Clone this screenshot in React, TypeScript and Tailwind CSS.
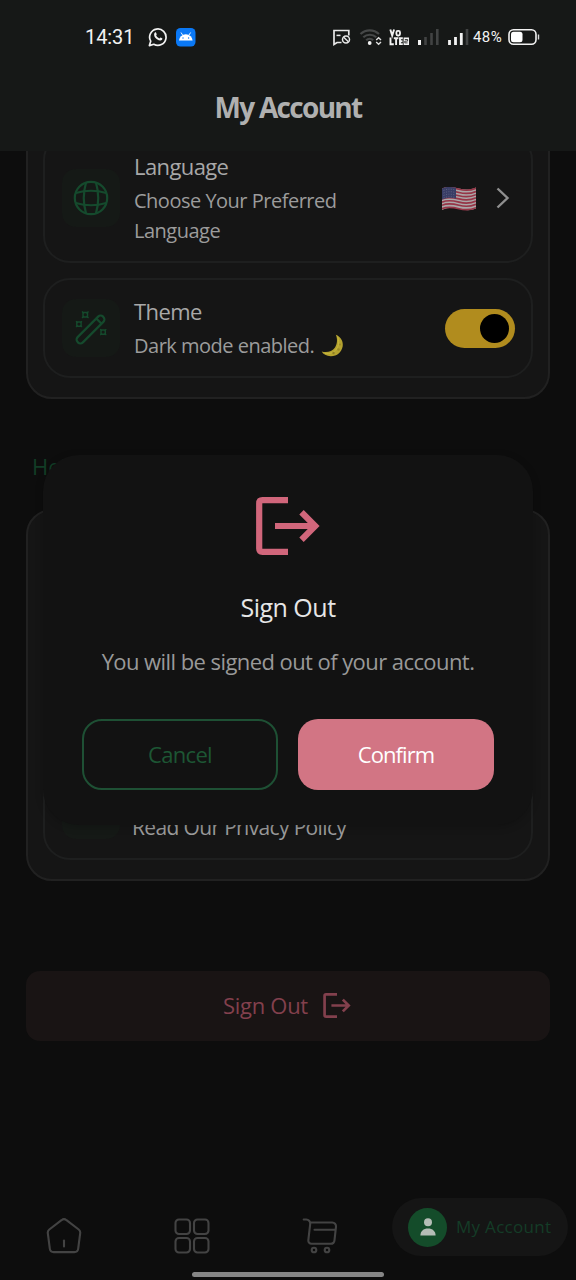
import React from "react";

function WhatsAppIcon() {
  return (
    <svg width="20" height="20" viewBox="0 0 20 20" fill="none" stroke="#f2f2f2" strokeWidth="1.7">
      <path d="M1.4 18.6l1.3-4.4a8.2 8.2 0 1 1 3.1 3.1z" strokeLinejoin="round" />
      <path
        d="M6.9 5.5c.5-.3 1-.2 1.2.3l.6 1.4c.1.4-.6 1-.5 1.3.7 1.3 1.7 2.3 3.1 2.9.4.1.9-.9 1.3-.8l1.5.7c.5.3.3 1-.1 1.5-1 1.2-2.8 1-5-.5C6.500 10.700 5.200 7.300 6.900 5.500z"
        fill="#f2f2f2"
        stroke="none"
      />
    </svg>
  );
}

function AndroidBadge() {
  return (
    <svg width="20" height="19" viewBox="0 0 20 19">
      <rect width="19.500" height="18.500" rx="4.500" fill="#0a78f5" />
      <path d="M3 12.600a6.800 6.300 0 0 1 13.600 0z" fill="#fff" />
      <path d="M5 4.500l1.900 3M14.600 4.500l-1.900 3" stroke="#fff" strokeWidth="0.900" />
      <circle cx="7" cy="10" r="0.700" fill="#0a78f5" />
      <circle cx="12.600" cy="10" r="0.700" fill="#0a78f5" />
    </svg>
  );
}

function StatusIcons() {
  return (
    <svg width="208" height="20" viewBox="332 27 208 20" fill="none">
      <path d="M341.500 42.500H337L334 44.500V30.500h14.800v5" stroke="#e8e8e8" strokeWidth="1.700" />
      <path d="M336.500 35.400h4" stroke="#e8e8e8" strokeWidth="1.500" />
      <circle cx="346" cy="39.500" r="3.500" stroke="#e8e8e8" strokeWidth="1.500" />
      <path d="M343.700 37.300l4.700 4.500" stroke="#e8e8e8" strokeWidth="1.400" />
      <path d="M360.500 34a13.500 13.500 0 0 1 18.500 0M363.300 37.300a9.500 9.500 0 0 1 13 0M366.200 40.300a5 5 0 0 1 7 0" stroke="#464848" strokeWidth="2.200" />
      <circle cx="369.700" cy="43" r="1.900" fill="#f2f2f2" />
      <path d="M376.200 40l2.400-2.200 2.400 2.200M376.200 42l2.400 2.200 2.400-2.200" stroke="#e0e0e0" strokeWidth="1.400" />
      <path d="M390.300 29.500l1.900 6 1.900-6M390.500 37.500v6.700h3.300M393.800 38.300h4.600M396.100 38.300v6.700M402.800 38.300h-2.800v5.800h2.800M400 41.200h2.500" stroke="#f2f2f2" strokeWidth="1.900" />
      <rect x="396.400" y="30.800" width="3.600" height="4.700" rx="1.500" stroke="#f2f2f2" strokeWidth="1.800" />
      <rect x="403.600" y="37.500" width="5.400" height="7.500" fill="#f2f2f2" />
      <path d="M404.800 39.500h2.800v1.600h-2.800v1.800h2.800" stroke="#161817" strokeWidth="0.800" />
      <path d="M419.500 40v5" stroke="#f2f2f2" strokeWidth="3" />
      <path d="M425.500 37v8M431.500 33v12M437.300 29v16" stroke="#414343" strokeWidth="2.600" />
      <path d="M449.500 40v5M455.500 37v8M461.300 33v12" stroke="#f2f2f2" strokeWidth="2.800" />
      <path d="M467 29v16" stroke="#414343" strokeWidth="2.600" />
      <rect x="509" y="29.800" width="27" height="14.400" rx="4.500" stroke="#f2f2f2" strokeWidth="1.600" />
      <rect x="511" y="31.700" width="11.500" height="10.600" rx="2.500" fill="#fff" />
      <path d="M538.500 34.500v5" stroke="#d8d8d8" strokeWidth="1.400" />
    </svg>
  );
}

function GlobeIcon() {
  return (
    <svg width="36" height="36" viewBox="0 0 36 36" fill="none" stroke="#154a2d" strokeWidth="2.200">
      <circle cx="18" cy="18" r="16.200" />
      <path d="M13 2.800C10.300 12 10.300 24 13 33.200M23 2.800C25.700 12 25.700 24 23 33.200M2.800 13C12 10.300 24 10.300 33.200 13M2.800 23C12 25.700 24 25.700 33.200 23" />
    </svg>
  );
}

function WandIcon() {
  return (
    <svg width="36" height="36" viewBox="0 0 36 36" fill="none" stroke="#154a2d" strokeWidth="2.200">
      <rect x="-3.700" y="-18" width="7.400" height="36" rx="3.500" transform="translate(17.500 19.500) rotate(45)" />
      <path d="M23.300 8.500l5.200 5.200" />
      <path d="M10 2.500h4.500v4.500H10zM3.800 12h4.300v4.300H3.800zM28 20h4.300v4.300H28z" strokeWidth="1.400" />
      <path d="M9 1.500l2 2M15.500 1.500l-2 2M9 8l2-2M15.500 8l-2-2M3 11.200l1.800 1.800M9 11.200l-1.800 1.800M3 17l1.800-1.800M9 17l-1.800-1.800M27.200 19.200l1.800 1.800M33.300 19.200l-1.800 1.800M27.200 25.200l1.800-1.800M33.300 25.200l-1.800-1.800" strokeWidth="1.200" />
    </svg>
  );
}

function FlagIcon() {
  const wave = (y: number) => `M0 ${y}C6 ${y - 2.5} 11 ${y - 1.5} 17 ${y}S28 ${y + 1.5} 34 ${y - 1}`;
  return (
    <svg width="34" height="25" viewBox="0 0 34 25" fill="none">
      <path d="M0 2.500C6 0 11 1 17 2.500S28 4 34 1.500V22.500C28 25 23 24.300 17 22.800S6 21.500 0 24z" fill="#aaa6a7" />
      {[3.3, 6.5, 9.7, 12.9, 16.1, 19.3, 22.7].map((y) => (
        <path key={y} d={wave(y)} stroke="#963547" strokeWidth="1.700" />
      ))}
      <path d="M0 2.500C5 .4 9 .8 14 1.800V12.500C9 11.500 5 11.500 0 13.500z" fill="#383d65" />
      <path d="M1.500 4.500C6 2.700 9 3 13 3.900M1.500 7C6 5.200 9 5.500 13 6.400M1.500 9.500C6 7.700 9 8 13 8.900M1.500 12C6 10.200 9 10.500 13 11.400" stroke="#666a88" strokeWidth="0.800" strokeDasharray="1 1.500" />
    </svg>
  );
}

function MoonIcon() {
  return (
    <svg width="24" height="24" viewBox="0 0 24 24">
      <path d="M14.800.800c5 2 7.700 6.500 6.900 11.500-1 6-6 10.200-12 10C5.500 22.100 2.200 20.300.700 17.500c5 1.500 10.500.2 13.300-4 2.300-3.600 2.700-8.500.8-12.700z" fill="#b4a22f" />
      <path d="M16.500 2.500c2 4 1.500 9-1 12.500-2.500 3.700-7 5.200-11.500 4.500" fill="none" stroke="#c6b73d" strokeWidth="1" />
      <circle cx="12.500" cy="19" r="1.200" fill="#8d7d23" />
      <circle cx="17.500" cy="15.500" r="1.300" fill="#9a8927" />
      <circle cx="19" cy="10.500" r=".9" fill="#9a8927" />
    </svg>
  );
}

function SignOutIcon({ className }: { className: string }) {
  return (
    <svg className={className} viewBox="0 0 64 58" fill="none" stroke="currentColor" strokeWidth="6.200">
      <path d="M32 3.200H6.500Q3.200 3.200 3.200 6.500v45Q3.200 54.800 6.500 54.800H32M19 29h40M45.500 15.300L59.200 29 45.500 42.700" />
    </svg>
  );
}

function HomeIcon() {
  return (
    <svg width="36" height="36" viewBox="0 0 36 36" fill="none" stroke="#434343" strokeWidth="2.100" strokeLinejoin="round" strokeLinecap="round">
      <path d="M15.500 2.200a4 4 0 0 1 5 0L32.700 11.500a4 4 0 0 1 1.500 3.700L32.200 30.500a4 4 0 0 1-4 3.600H7.800a4 4 0 0 1-4-3.600L1.800 15.200a4 4 0 0 1 1.500-3.700z" />
      <path d="M18 22.500v6" />
    </svg>
  );
}

function GridIcon() {
  return (
    <svg width="36" height="36" viewBox="0 0 36 36" fill="none" stroke="#434343" strokeWidth="2.100">
      <rect x="1.500" y="1.500" width="14.500" height="14.500" rx="3.500" />
      <rect x="20" y="1.500" width="14.500" height="14.500" rx="3.500" />
      <rect x="1.500" y="20" width="14.500" height="14.500" rx="3.500" />
      <rect x="20" y="20" width="14.500" height="14.500" rx="3.500" />
    </svg>
  );
}

function CartIcon() {
  return (
    <svg width="36" height="36" viewBox="0 0 36 36" fill="none" stroke="#434343" strokeWidth="2.100" strokeLinecap="round">
      <path d="M1.700 1.500h2.500a4 4 0 0 1 4 4.300L6.300 22.300a3.200 3.200 0 0 0 3.200 3.500H28.500a4 4 0 0 0 4-3.700L34 8.700a3.800 3.800 0 0 0-3.800-4.200H8M12.500 11.700h21" />
      <circle cx="12" cy="32" r="2.300" />
      <circle cx="25" cy="32" r="2.300" />
    </svg>
  );
}

function Row({ icon, children, trailing, className = "" }: { icon?: React.ReactNode; children?: React.ReactNode; trailing?: React.ReactNode; className?: string }) {
  return (
    <div className={`flex shrink-0 items-center rounded-[27px] border-2 border-[#1e1f1f] pr-4 pl-[17px] ${className}`}>
      <div className="flex size-[58px] shrink-0 items-center justify-center rounded-[14px] bg-[#151916]">{icon}</div>
      <div className="ml-[14px] flex-1">{children}</div>
      {trailing}
    </div>
  );
}

const card = "flex shrink-0 flex-col gap-[15px] rounded-[26px] border-2 border-[#212121] bg-[#151515] px-[15px] py-[19px]";

export default function App() {
  return (
    <div className="relative flex h-[1280px] w-[576px] flex-col overflow-hidden bg-[#0d0d0d] font-['Open_Sans',sans-serif] text-[#a8a8a8]">
      <header className="z-10 flex h-[151px] shrink-0 flex-col bg-[#161817]">
        <div className="flex h-[74px] items-center pr-9 pl-[85px] font-['Roboto',sans-serif] text-[#f2f2f2]">
          <span className="w-[63px] text-[20px] leading-none tracking-[-0.100px]">14:31</span>
          <WhatsAppIcon />
          <span className="ml-2">
            <AndroidBadge />
          </span>
          <div className="relative ml-auto">
            <StatusIcons />
            <span className="absolute top-[3px] left-[141px] text-[15px] leading-none tracking-[0.400px]">48%</span>
          </div>
        </div>
        <h1 className="mt-[13px] text-center text-[28px] leading-[40px] font-bold tracking-[-1.700px] text-[#b0b0b0]">My Account</h1>
      </header>

      <main className="flex min-h-0 flex-1 flex-col px-[26px]">
        <section className={`-mt-[39px] ${card}`}>
          <Row
            className="h-[130px]"
            icon={<GlobeIcon />}
            trailing={
              <div className="mr-[4px] flex items-center gap-[19px]">
                <FlagIcon />
                <svg width="16" height="22" viewBox="0 0 16 22" fill="none" stroke="#8f8f8f" strokeWidth="2.400">
                  <path d="M2.500 1.500l10 9.500-10 9.500" />
                </svg>
              </div>
            }
          >
            <p className="mb-1 text-[22px] leading-[30px] tracking-[-0.600px]">Language</p>
            <p className="w-[230px] pt-px text-[20px] leading-[30px] tracking-[-0.500px] text-[#9c9c9c]">Choose Your Preferred Language</p>
          </Row>
          <Row
            className="h-[100px]"
            icon={<WandIcon />}
            trailing={
              <div className="flex h-[39px] w-[70px] items-center justify-end rounded-full bg-[#b18c1e] pr-[6px]">
                <div className="size-[29px] rounded-full bg-black" />
              </div>
            }
          >
            <p className="mb-1 text-[22px] leading-[30px] tracking-[-0.600px]">Theme</p>
            <p className="flex items-center gap-[7px] pt-px text-[20px] leading-[30px] tracking-[-0.500px] text-[#9c9c9c]">
              <span>Dark mode enabled.</span>
              <MoonIcon />
            </p>
          </Row>
        </section>

        <h2 className="mt-[52px] shrink-0 pl-[6px] text-[22px] leading-[30px] text-[#123d26]">Help</h2>

        <section className={`mt-[28px] ${card}`}>
          <Row className="h-[100px]" />
          <Row className="h-[100px]" />
          <Row className="h-[100px]">
            <p className="-ml-[2px] pt-[34px] text-[21px] leading-[30px] tracking-[-0.650px] text-[#9c9c9c]">Read Our Privacy Policy</p>
          </Row>
        </section>

        <button className="mt-[90px] flex h-[70px] shrink-0 items-center justify-center gap-[15px] rounded-[14px] bg-[#191414] pr-[2px] pb-[2px] text-[22px] tracking-[-0.300px] text-[#83404d]">
          Sign Out
          <SignOutIcon className="h-[25px] w-[28px]" />
        </button>
      </main>

      <nav className="flex h-[95px] shrink-0 bg-[#0d0d0d]">
        <div className="flex w-32 justify-center pt-[33px]">
          <HomeIcon />
        </div>
        <div className="flex w-32 justify-center pt-[33px]">
          <GridIcon />
        </div>
        <div className="flex w-32 justify-center pt-[33px]">
          <CartIcon />
        </div>
        <div className="mt-[13px] ml-2 flex h-[58px] w-[176px] items-center rounded-full bg-[#151515] pl-4">
          <div className="flex size-[39px] items-center justify-center rounded-full bg-[#144c2a]">
            <svg width="16" height="18" viewBox="0 0 16 18" fill="#b5bdb6">
              <circle cx="8" cy="4.300" r="4" />
              <path d="M.4 17.500c0-4.300 3-7 7.600-7s7.600 2.700 7.600 7z" />
            </svg>
          </div>
          <span className="ml-[9px] text-[17px] tracking-[0.300px] whitespace-nowrap text-[#143c27]">My Account</span>
        </div>
      </nav>

      <div className="absolute bottom-[3px] left-[192px] h-[5px] w-[192px] rounded-full bg-[#868686]" />

      <div role="dialog" className="absolute top-[455px] left-[43px] flex h-[370px] w-[490px] flex-col items-center rounded-[36px] bg-[#121212] px-[39px] pt-[42px] shadow-[0_2px_8px_rgba(0,0,0,0.2)]">
        <SignOutIcon className="h-[58px] w-[64px] text-[#d1667b]" />
        <h3 className="mt-[34px] text-[25px] leading-[36px] tracking-[-0.500px] text-[#e6e6e6]">Sign Out</h3>
        <p className="mt-[20px] text-[22px] leading-[32px] tracking-[-0.570px] whitespace-nowrap text-[#999]">You will be signed out of your account.</p>
        <div className="mt-[42px] flex w-full gap-5 text-[22px]">
          <button className="h-[71px] w-[196px] rounded-[20px] border-2 border-[#1e5034] tracking-[-0.700px] text-[#1d5634]">Cancel</button>
          <button className="h-[71px] w-[196px] rounded-[20px] bg-[#d27584] tracking-[-0.900px] text-white">Confirm</button>
        </div>
      </div>
    </div>
  );
}
